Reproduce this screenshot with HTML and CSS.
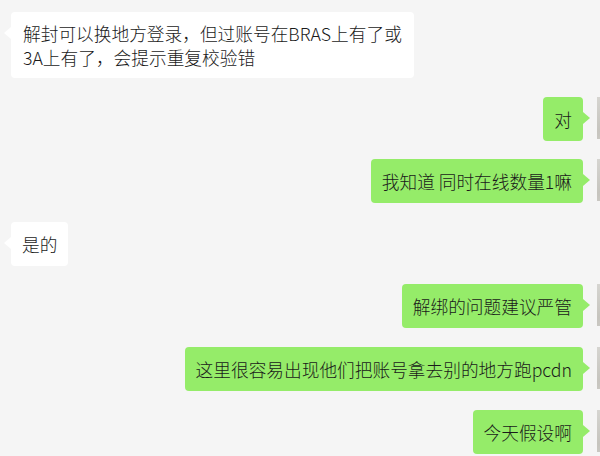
FILE: index.html
```html
<!DOCTYPE html>
<html lang="zh-CN">
  <head>
    <meta charset="UTF-8" />
    <meta name="viewport" content="width=device-width, initial-scale=1.0" />
    <title>聊天记录</title>
    <link rel="stylesheet" href="styles.css">
  </head>
  <body>
    <!-- chat messages -->
    <div class="chat">
      <div class="row left">
        <div class="avatar"></div>
        <div class="bubble multi">解封可以换地方登录，但过账号在BRAS上有了或<br>3A上有了，会提示重复校验错</div>
      </div>

      <div class="row right">
        <div class="bubble">对</div>
        <div class="avatar"></div>
      </div>

      <div class="row right">
        <div class="bubble">我知道 同时在线数量1嘛</div>
        <div class="avatar"></div>
      </div>

      <div class="row left">
        <div class="avatar"></div>
        <div class="bubble">是的</div>
      </div>

      <div class="row right">
        <div class="bubble">解绑的问题建议严管</div>
        <div class="avatar"></div>
      </div>

      <div class="row right">
        <div class="bubble">这里很容易出现他们把账号拿去别的地方跑pcdn</div>
        <div class="avatar"></div>
      </div>

      <div class="row right">
        <div class="bubble">今天假设啊</div>
        <div class="avatar"></div>
      </div>
    </div>
  </body>
</html>
```

FILE: styles.css
```css
html,
body {
  margin: 0;
  height: 100%;
  background: #f5f5f5;
  overflow: hidden;
}
body {
  font-family: "Noto Sans CJK SC", "Noto Sans", sans-serif;
  font-weight: 300;
  color: #1a1a1a;
}
.chat {
  display: flex;
  flex-direction: column;
  gap: 18.6px;
  padding-top: 12px;
}
.row {
  display: flex;
  align-items: flex-start;
  gap: 14px;
}
.row.left {
  justify-content: flex-start;
  margin-left: -43px;
}
.row.right {
  justify-content: flex-end;
  margin-right: -37px;
}
.avatar {
  flex: none;
  width: 40px;
  height: 42px;
  background: linear-gradient(160deg, #d6d5d1, #c6c4be 60%, #cfcdc8);
}
.bubble {
  position: relative;
  padding: 10px 11px;
  border-radius: 4px;
  font-size: 17.7px;
  line-height: 24px;
  white-space: nowrap;
}
.bubble.multi {
  padding: 9px 12px;
}
.left .bubble {
  background: #ffffff;
}
.right .bubble {
  background: #95ec69;
}
.bubble::after {
  content: "";
  position: absolute;
  top: 15px;
  border-top: 6px solid transparent;
  border-bottom: 6px solid transparent;
}
.left .bubble::after {
  left: -7px;
  border-right: 7px solid #ffffff;
}
.right .bubble::after {
  right: -7px;
  border-left: 7px solid #95ec69;
}
```
